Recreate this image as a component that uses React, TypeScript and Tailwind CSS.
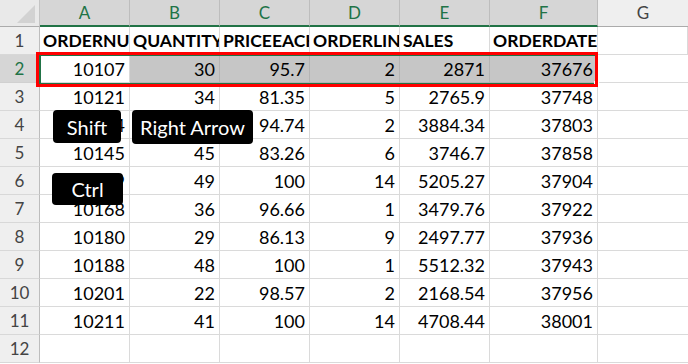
import React from "react";

const cols = ["A", "B", "C", "D", "E", "F", "G"];
const headers = ["ORDERNUMBER", "QUANTITYORDERED", "PRICEEACH", "ORDERLINENUMBER", "SALES", "ORDERDATE", ""];
const data: string[][] = [
  ["10107", "30", "95.7", "2", "2871", "37676"],
  ["10121", "34", "81.35", "5", "2765.9", "37748"],
  ["10134", "41", "94.74", "2", "3884.34", "37803"],
  ["10145", "45", "83.26", "6", "3746.7", "37858"],
  ["10159", "49", "100", "14", "5205.27", "37904"],
  ["10168", "36", "96.66", "1", "3479.76", "37922"],
  ["10180", "29", "86.13", "9", "2497.77", "37936"],
  ["10188", "48", "100", "1", "5512.32", "37943"],
  ["10201", "22", "98.57", "2", "2168.54", "37956"],
  ["10211", "41", "100", "14", "4708.44", "38001"],
  ["", "", "", "", "", ""],
];

const font = { fontFamily: "Lato, 'Open Sans', sans-serif" };

export default function App() {
  return (
    <div className="relative w-[688px] h-[364px] overflow-hidden bg-white" style={font}>
      <div className="grid grid-cols-[40px_90px_90px_90px_90px_90px_108px_90px]">
        {/* corner */}
        <div className="relative h-[27px] bg-[#e9e9e9] border-r border-[#c4c4c4] border-b border-b-[#ababab]">
          <div
            className="absolute right-[4px] bottom-[3px] w-[18px] h-[18px] bg-[#d2d2d2]"
            style={{ clipPath: "polygon(100% 0, 100% 100%, 0 100%)" }}
          />
        </div>
        {cols.map((c) => {
          const sel = c !== "G";
          return (
            <div
              key={c}
              className={
                sel
                  ? "h-[27px] flex items-center justify-center bg-[#d6d6d6] border-r border-[#bdbdbd] border-b-2 border-b-[#217346] text-[#217346] text-[17px]"
                  : "h-[27px] flex items-center justify-center bg-[#efefef] border-b border-b-[#ababab] text-[#444] text-[17px]"
              }
            >
              {c}
            </div>
          );
        })}
        {/* row 1 */}
        <div className="h-[28px] flex items-center justify-center bg-[#efefef] border-r border-[#bdbdbd] border-b border-b-[#d8d8d8] text-[#444] text-[17px]">
          1
        </div>
        {headers.map((h, i) => (
          <div
            key={i}
            className="h-[28px] flex items-center pl-[3px] pt-[2px] overflow-hidden whitespace-nowrap border-r border-b border-[#dadada] font-bold text-black text-[17.5px]"
          >
            {h}
          </div>
        ))}
        {data.map((row, r) => {
          const rn = r + 2;
          const selRow = rn === 2;
          return (
            <React.Fragment key={rn}>
              <div
                className={
                  selRow
                    ? "h-[28px] flex items-center justify-center bg-[#d6d6d6] border-r border-[#bdbdbd] border-b border-b-[#d0d0d0] text-[#217346] text-[17px]"
                    : "h-[28px] flex items-center justify-center bg-[#efefef] border-r border-[#bdbdbd] border-b border-b-[#d8d8d8] text-[#444] text-[17px]"
                }
              >
                {rn}
              </div>
              {row.map((v, i) => (
                <div
                  key={i}
                  className={
                    selRow && i > 0
                      ? "h-[28px] flex items-center justify-end pr-[4px] pt-[2px] bg-[#c6c6c6] border-r border-b border-[#b4b4b4] text-black text-[18px]"
                      : "h-[28px] flex items-center justify-end pr-[4px] pt-[2px] border-r border-b border-[#dadada] text-black text-[18px]"
                  }
                >
                  {v}
                </div>
              ))}
              <div className="h-[28px] border-b border-[#dadada]" />
            </React.Fragment>
          );
        })}
      </div>

      {/* selection border */}
      <div className="absolute left-[39px] top-[54px] w-[559px] h-[31px] border-2 border-[#217346]" />
      <div className="absolute left-[594px] top-[81px] w-[5px] h-[5px] bg-[#217346] border border-white" />
      {/* red annotation */}
      <div className="absolute left-[36px] top-[52px] w-[562px] h-[35px] border-[3px] border-[#ff0000]" />

      {/* key badges */}
      <div className="absolute left-[53px] top-[110px] w-[68px] h-[33px] rounded-[4px] bg-black text-white text-[20px] flex items-center justify-center">
        Shift
      </div>
      <div className="absolute left-[132px] top-[110px] w-[121px] h-[34px] rounded-[4px] bg-black text-white text-[20px] flex items-center justify-center">
        Right Arrow
      </div>
      <div className="absolute left-[52px] top-[173px] w-[71px] h-[32px] rounded-[4px] bg-black text-white text-[20px] flex items-center justify-center">
        Ctrl
      </div>
    </div>
  );
}
